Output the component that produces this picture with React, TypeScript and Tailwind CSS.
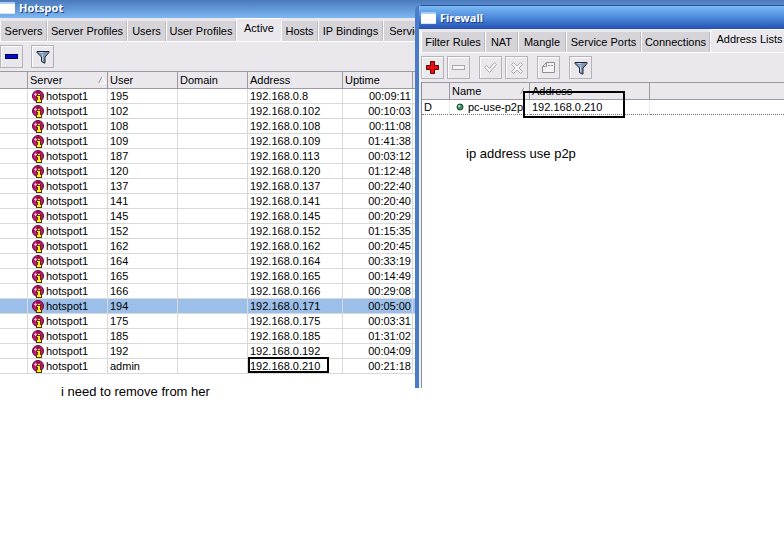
import type { ReactNode } from "react";

const sessions = [
  { user: "195", address: "192.168.0.8", uptime: "00:09:11" },
  { user: "102", address: "192.168.0.102", uptime: "00:10:03" },
  { user: "108", address: "192.168.0.108", uptime: "00:11:08" },
  { user: "109", address: "192.168.0.109", uptime: "01:41:38" },
  { user: "187", address: "192.168.0.113", uptime: "00:03:12" },
  { user: "120", address: "192.168.0.120", uptime: "01:12:48" },
  { user: "137", address: "192.168.0.137", uptime: "00:22:40" },
  { user: "141", address: "192.168.0.141", uptime: "00:20:40" },
  { user: "145", address: "192.168.0.145", uptime: "00:20:29" },
  { user: "152", address: "192.168.0.152", uptime: "01:15:35" },
  { user: "162", address: "192.168.0.162", uptime: "00:20:45" },
  { user: "164", address: "192.168.0.164", uptime: "00:33:19" },
  { user: "165", address: "192.168.0.165", uptime: "00:14:49" },
  { user: "166", address: "192.168.0.166", uptime: "00:29:08" },
  { user: "194", address: "192.168.0.171", uptime: "00:05:00" },
  { user: "175", address: "192.168.0.175", uptime: "00:03:31" },
  { user: "185", address: "192.168.0.185", uptime: "01:31:02" },
  { user: "192", address: "192.168.0.192", uptime: "00:04:09" },
  { user: "admin", address: "192.168.0.210", uptime: "00:21:18" },
];

const hotspotTabs = [
  { label: "Servers", width: "w-[47px]" },
  { label: "Server Profiles", width: "w-[80px]" },
  { label: "Users", width: "w-[39px]" },
  { label: "User Profiles", width: "w-[70px]" },
  { label: "Active", width: "w-[45px]" },
  { label: "Hosts", width: "w-[37px]" },
  { label: "IP Bindings", width: "w-[65px]" },
  { label: "Service Ports", width: "w-[78px]" },
];

const firewallTabs = [
  { label: "Filter Rules", width: "w-[64px]" },
  { label: "NAT", width: "w-[33px]" },
  { label: "Mangle", width: "w-[48px]" },
  { label: "Service Ports", width: "w-[75px]" },
  { label: "Connections", width: "w-[69px]" },
  { label: "Address Lists", width: "w-[78px]" },
];

function WindowIcon() {
  return (
    <svg width="15" height="12" viewBox="0 0 15 12" className="shrink-0" aria-hidden="true">
      <rect width="15" height="12" fill="#fff" />
      <rect width="15" height="2" fill="#a9cdf5" />
      <rect y="11" width="15" height="1" fill="#d5e4f7" />
    </svg>
  );
}

function FilterIcon() {
  return (
    <svg width="14" height="14" viewBox="0 0 14 14" aria-hidden="true">
      <path d="M1 1.500h12v1L9 7v6H8L5.500 11.500V7L1 2.500z" fill="#8298b8" stroke="#1c2433" />
      <path d="M3.500 2.500h4M6.500 4v7" fill="none" stroke="#c3d1e4" />
    </svg>
  );
}

function HotspotIcon() {
  return (
    <svg width="12" height="13" viewBox="0 0 12 13" className="shrink-0" aria-hidden="true">
      <circle cx="6" cy="6" r="5.500" fill="#cc1470" stroke="#4f0a38" />
      <path d="M2 4.500h3M3.500 3v3" stroke="#f6b4d4" />
      <path d="M5 2h3v1H5z" fill="#6a0c48" />
      <path d="M4 6h1V4h4v5h1v4H4v-3h1V8H4z" fill="#54300f" />
      <path d="M6 4h2v1H6zM5 6h3v4h1v2H5v-2h1V7H5z" fill="#ffee22" />
    </svg>
  );
}

function SortMark() {
  return (
    <svg width="8" height="8" viewBox="0 0 8 8" className="shrink-0" aria-hidden="true">
      <path d="M.5 7.500L4 .5" stroke="#9b999e" />
      <path d="M4 .5l3.500 7H.5" fill="none" stroke="#fff" />
    </svg>
  );
}

function TitleBar({ title, className }: { title: string; className: string }) {
  return (
    <header className={`flex shrink-0 items-center gap-1 ${className}`}>
      <WindowIcon />
      <h2 className="font-['Noto_Sans',sans-serif] text-[11px] leading-[14px] font-bold text-white [text-shadow:1px_1px_0_#1b3f86]">
        {title}
      </h2>
    </header>
  );
}

function Tabs({ tabs, active }: { tabs: { label: string; width: string }[]; active: string }) {
  return (
    <div role="tablist" className="flex h-[24px] shrink-0 items-end overflow-hidden border-b border-white">
      {tabs.map((tab) => {
        const selected = tab.label === active;
        return (
          <button
            key={tab.label}
            type="button"
            role="tab"
            aria-selected={selected}
            className={`shrink-0 whitespace-nowrap ${tab.width} ${
              selected
                ? "-mb-px h-[24px] border-t border-l border-white bg-[#eae8ed] pb-1"
                : "h-[20px] border-r border-l border-r-[#bdbabf] border-l-white bg-[#d6d4d8]"
            }`}
          >
            {tab.label}
          </button>
        );
      })}
    </div>
  );
}

function ToolButton({ label, disabled, children }: { label: string; disabled?: boolean; children: ReactNode }) {
  return (
    <button
      type="button"
      aria-label={label}
      disabled={disabled}
      className="flex h-[23px] w-[23px] shrink-0 items-center justify-center border border-[#b5b2b8] bg-[#eae8ed] shadow-[inset_1px_1px_0_#fff]"
    >
      {children}
    </button>
  );
}

const headCell = "border-r border-r-[#9c9a9f] pl-[2px] text-left font-normal";
const cell = "border-r border-b border-[#d9d9d9] pl-[2px]";

function HotspotWindow() {
  return (
    <section aria-label="Hotspot" className="flex flex-col overflow-hidden">
      <TitleBar title="Hotspot" className="h-[18px] bg-linear-to-b from-[#4a7abc] to-[#7db7f0] pb-[3px]" />
      <div className="flex flex-col bg-[#eae8ed]">
        <Tabs tabs={hotspotTabs} active="Active" />
        <div className="flex h-[29px] items-center gap-2">
          <ToolButton label="Remove">
            <svg width="13" height="5" viewBox="0 0 13 5" aria-hidden="true">
              <rect x=".5" y=".5" width="12" height="4" fill="#0a0ad0" stroke="#000050" />
            </svg>
          </ToolButton>
          <ToolButton label="Filter">
            <FilterIcon />
          </ToolButton>
        </div>
      </div>
      <table className="w-full table-fixed border-separate border-spacing-0 leading-[14px]">
        <colgroup>
          <col className="w-[28px]" />
          <col className="w-[80px]" />
          <col className="w-[70px]" />
          <col className="w-[70px]" />
          <col className="w-[95px]" />
          <col className="w-[70px]" />
          <col />
        </colgroup>
        <thead>
          <tr className="h-[18px] bg-[#eae8ed] [&>th]:border-t [&>th]:border-b [&>th]:border-t-[#9c9a9f] [&>th]:border-b-[#9c9a9f]">
            <th className={headCell} aria-label="Flags"></th>
            <th className={headCell}>
              <span className="flex items-center justify-between pr-px">
                Server
                <SortMark />
              </span>
            </th>
            <th className={headCell}>User</th>
            <th className={headCell}>Domain</th>
            <th className={headCell}>Address</th>
            <th className={headCell}>Uptime</th>
            <th aria-label="More columns"></th>
          </tr>
        </thead>
        <tbody>
          {sessions.map((s) => (
            <tr key={s.user} className={`h-[15px] ${s.user === "194" ? "bg-[#9bbfe9]" : "bg-white"}`}>
              <td className={cell}></td>
              <td className={cell}>
                <span className="flex h-[14px] items-center gap-[2px] pl-[2px]">
                  <HotspotIcon />
                  hotspot1
                </span>
              </td>
              <td className={cell}>{s.user}</td>
              <td className={cell}></td>
              <td className={`${cell} relative`}>
                {s.address}
                {s.user === "admin" && (
                  <span className="absolute top-[-2px] left-0 h-[16px] w-[81px] border-2 border-black"></span>
                )}
              </td>
              <td className={`${cell} pr-px text-right`}>{s.uptime}</td>
              <td className="border-b border-[#d9d9d9]"></td>
            </tr>
          ))}
        </tbody>
      </table>
    </section>
  );
}

const firewallTools = [
  [
    {
      label: "Add",
      disabled: false,
      icon: (
        <svg width="13" height="13" viewBox="0 0 13 13" aria-hidden="true">
          <path d="M4.500 .5h4v4h4v4h-4v4h-4v-4h-4v-4h4z" fill="#e81010" stroke="#5c0000" />
        </svg>
      ),
    },
    {
      label: "Remove",
      disabled: true,
      icon: (
        <svg width="13" height="5" viewBox="0 0 13 5" aria-hidden="true">
          <rect x=".5" y=".5" width="12" height="4" fill="#f4f3f5" stroke="#aaa8ad" />
        </svg>
      ),
    },
  ],
  [
    {
      label: "Enable",
      disabled: true,
      icon: (
        <svg width="13" height="11" viewBox="0 0 13 11" aria-hidden="true">
          <path d="M.5 5.500l2-2 3 3 5-6 2 2-7 8z" fill="#f4f3f5" stroke="#aaa8ad" />
        </svg>
      ),
    },
    {
      label: "Disable",
      disabled: true,
      icon: (
        <svg width="12" height="12" viewBox="0 0 12 12" aria-hidden="true">
          <path d="M2.500 .5L6 4 9.500 .5l2 2L8 6l3.500 3.500-2 2L6 8l-3.500 3.500-2-2L4 6 .5 2.500z" fill="#f4f3f5" stroke="#aaa8ad" />
        </svg>
      ),
    },
  ],
  [
    {
      label: "Comment",
      disabled: true,
      icon: (
        <svg width="13" height="11" viewBox="0 0 13 11" aria-hidden="true">
          <path d="M4.500 .5h8v10H.5v-6z" fill="#f4f3f5" stroke="#8f8d92" />
          <path d="M.5 4.500h4v-4" fill="none" stroke="#8f8d92" />
          <path d="M6 3.500h2M9 3.500h2" stroke="#8f8d92" />
        </svg>
      ),
    },
  ],
  [{ label: "Filter", disabled: false, icon: <FilterIcon /> }],
];

function FirewallWindow() {
  return (
    <section
      aria-label="Firewall"
      className="absolute top-[5px] right-0 left-[415px] flex h-[383px] flex-col overflow-hidden rounded-tl-[6px] border-l-4 border-[#4a7bc8] bg-white"
    >
      <TitleBar
        title="Firewall"
        className="-ml-1 h-[24px] border-t border-[#2450a0] bg-linear-to-b from-[#7dbaf2] via-[#4c8ade] to-[#2450b0] pt-px pl-[6px]"
      />
      <div className="flex grow flex-col border-l-2 border-[#f2f1f4] bg-white">
        <div className="bg-[#eae8ed]">
          <Tabs tabs={firewallTabs} active="Address Lists" />
          <div className="flex h-[29px] items-center gap-[9px]">
            {firewallTools.map((group) => (
              <div key={group[0].label} className="flex gap-[3px]">
                {group.map((tool) => (
                  <ToolButton key={tool.label} label={tool.label} disabled={tool.disabled}>
                    {tool.icon}
                  </ToolButton>
                ))}
              </div>
            ))}
          </div>
        </div>
        <div className="grow border-l border-[#7f8fb4]">
          <table className="w-full table-fixed border-separate border-spacing-0 leading-[14px]">
            <colgroup>
              <col className="w-[28px]" />
              <col className="w-[80px]" />
              <col className="w-[120px]" />
              <col />
            </colgroup>
            <thead>
              <tr className="h-[18px] bg-[#eae8ed] [&>th]:border-t [&>th]:border-b [&>th]:border-t-[#9c9a9f] [&>th]:border-b-[#9c9a9f]">
                <th className={headCell} aria-label="Flags"></th>
                <th className={headCell}>
                  <span className="flex items-center justify-between pr-px">
                    Name
                    <SortMark />
                  </span>
                </th>
                <th className={headCell}>Address</th>
                <th aria-label="More columns"></th>
              </tr>
            </thead>
            <tbody>
              <tr className="h-[15px] [&>td]:border-b [&>td]:border-dotted [&>td]:border-b-[#77757a]">
                <td className="border-r border-r-[#d9d9d9] pl-[2px]">D</td>
                <td className="border-r border-r-[#d9d9d9] pl-[6px]">
                  <span className="flex h-[14px] items-center gap-1">
                    <svg width="8" height="8" viewBox="0 0 8 8" className="shrink-0" aria-hidden="true">
                      <circle cx="4" cy="4" r="3" fill="#3c9a6c" stroke="#143c2a" />
                      <rect x="2" y="2" width="2" height="2" fill="#a5dfc0" />
                    </svg>
                    pc-use-p2p
                  </span>
                </td>
                <td className="relative border-r border-r-[#d9d9d9] pl-[2px]">
                  192.168.0.210
                  <span className="absolute top-[-9px] left-[-7px] h-[27px] w-[102px] border-2 border-black"></span>
                </td>
                <td></td>
              </tr>
            </tbody>
          </table>
          <p className="pt-[30px] pl-[44px] text-[13px] leading-[18px]">ip address use p2p</p>
        </div>
      </div>
    </section>
  );
}

export default function App() {
  return (
    <main className="relative min-h-screen bg-white font-['Liberation_Sans',Arial,sans-serif] text-[11px] text-black">
      <HotspotWindow />
      <p className="pt-[9px] pl-[61px] text-[13px] leading-[18px]">i need to remove from her</p>
      <FirewallWindow />
    </main>
  );
}
